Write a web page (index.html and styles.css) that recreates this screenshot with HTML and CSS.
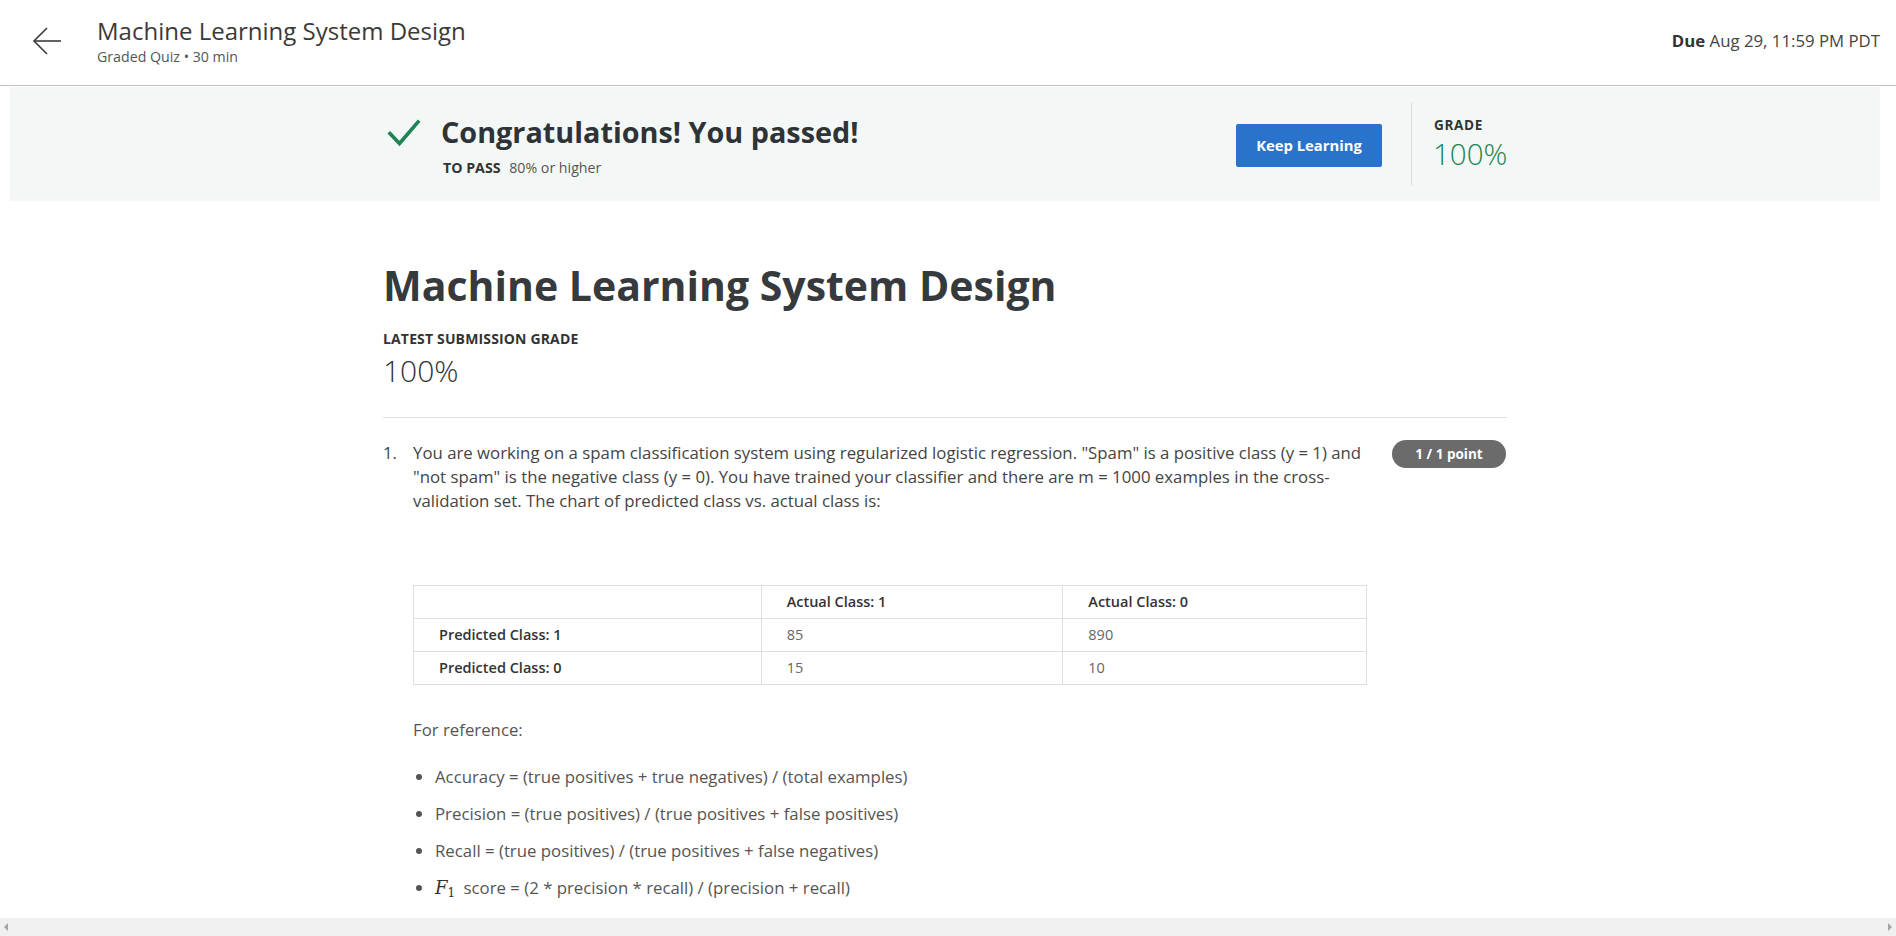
FILE: index.html
```html
<!DOCTYPE html>
<html lang="en">
<head>
<meta charset="utf-8">
<title>Machine Learning System Design</title>
<link rel="stylesheet" href="styles.css">
</head>
<body>
<div class="app">
  <header class="topbar">
    <div class="back">
      <svg width="30" height="30" viewBox="0 0 30 30" fill="none" stroke="#3c3c3c" stroke-width="1.6">
        <path d="M29 15H2"/>
        <path d="M15 2L2 15l13 13"/>
      </svg>
    </div>
    <div class="top-title">
      <div class="top-name">Machine Learning System Design</div>
      <div class="top-sub">Graded Quiz • 30 min</div>
    </div>
    <div class="due"><b>Due</b> Aug 29, 11:59 PM PDT</div>
  </header>

  <main class="scroll">
    <section class="banner">
      <div class="wrap banner-inner">
        <div class="pass">
          <svg class="check" width="34" height="30" viewBox="0 0 34 30" fill="none" stroke="#1f8354" stroke-width="3.6" stroke-linecap="square">
            <path d="M3 15.5l9.5 10L31 4"/>
          </svg>
          <div class="pass-text">
            <div class="pass-title">Congratulations! You passed!</div>
            <div class="pass-sub"><b>TO PASS</b> 80% or higher</div>
          </div>
        </div>
        <button class="keep">Keep Learning</button>
        <div class="vline"></div>
        <div class="grade">
          <div class="grade-label">GRADE</div>
          <div class="grade-value">100%</div>
        </div>
      </div>
    </section>

    <section class="wrap content">
      <h1 class="title">Machine Learning System Design</h1>
      <div class="latest-label">LATEST SUBMISSION GRADE</div>
      <div class="latest-value">100%</div>
      <hr class="divider">

      <div class="question">
        <div class="qnum">1.</div>
        <div class="qbody">
          <p class="qtext">You are working on a spam classification system using regularized logistic regression. "Spam" is a positive class (y = 1) and "not spam" is the negative class (y = 0). You have trained your classifier and there are m = 1000 examples in the cross-validation set. The chart of predicted class vs. actual class is:</p>

          <table class="chart">
            <colgroup><col class="c1"><col class="c2"><col class="c3"></colgroup>
            <tr><th></th><th>Actual Class: 1</th><th>Actual Class: 0</th></tr>
            <tr><th>Predicted Class: 1</th><td>85</td><td>890</td></tr>
            <tr><th>Predicted Class: 0</th><td>15</td><td>10</td></tr>
          </table>

          <p class="ref">For reference:</p>
          <ul class="formulas">
            <li>Accuracy = (true positives + true negatives) / (total examples)</li>
            <li>Precision = (true positives) / (true positives + false positives)</li>
            <li>Recall = (true positives) / (true positives + false negatives)</li>
            <li><span class="math"><i>F</i><sub>1</sub></span> score = (2 * precision * recall) / (precision + recall)</li>
          </ul>
        </div>
        <div class="badge">1 / 1 point</div>
      </div>
    </section>
  </main>

  <div class="hscroll">
    <span class="arr-left"></span>
    <span class="arr-right"></span>
  </div>
</div>
</body>
</html>
```

FILE: styles.css
```css
* { box-sizing: border-box; }
html, body { margin: 0; padding: 0; }
body {
  font-family: "Open Sans", "Liberation Sans", sans-serif;
  color: #373a3c;
  background: #fff;
}
.app {
  height: 936px;
  display: flex;
  flex-direction: column;
  overflow: hidden;
}

/* top bar */
.topbar {
  height: 86px;
  flex: 0 0 86px;
  border-bottom: 1px solid #c4c4c4;
  display: flex;
  align-items: center;
  padding: 0 16px 4px 32px;
}
.back { width: 30px; height: 30px; margin-right: 35px; display: flex; }
.top-title { flex: 1; }
.top-name { font-size: 24px; line-height: 32px; color: #3a3a3a; }
.top-sub { font-size: 14.2px; line-height: 20px; color: #555; }
.due { font-size: 16.8px; color: #444; margin-top: 0; }
.due b { color: #333; font-weight: 700; }

/* scroll area */
.scroll {
  flex: 1;
  overflow: hidden;
  padding: 1px 16px 0 10px;
}
.wrap { width: 1124px; margin: 0 auto; }

.banner { background: #f3f8f7; height: 114px; }
.banner-inner { height: 114px; display: flex; align-items: center; }
.pass { flex: 1; display: flex; align-items: flex-start; padding-left: 4px; margin-top: 3px; }
.check { margin-top: 4px; margin-right: 20px; flex: none; }
.pass-title { font-size: 28.8px; line-height: 36px; font-weight: 700; color: #2f3336; }
.pass-sub { font-size: 14.2px; line-height: 20px; margin-top: 8px; color: #555; padding-left: 2px; }
.pass-sub b { color: #333; margin-right: 5px; }
.keep {
  width: 146px; height: 43px;
  background: #2a73cc; color: #fff;
  border: 0; border-radius: 2px;
  font-family: inherit; font-size: 14.8px; font-weight: 700;
  margin-top: 2px;
}
.vline { width: 1px; height: 82px; background: #dadada; margin: 0 22px 0 29px; }
.grade { width: 73px; margin-top: 1px; }
.grade-label { font-size: 13.6px; line-height: 18px; font-weight: 700; letter-spacing: 0.6px; color: #333; }
.grade-value { font-size: 29.5px; line-height: 40px; font-weight: 300; color: #1f8354; margin-left: -1px; }

/* content */
.content { padding-top: 56px; }
.title { margin: 0; font-size: 41px; line-height: 56px; font-weight: 700; color: #373a3c; }
.latest-label { margin-top: 16px; font-size: 14px; letter-spacing: 0.15px; line-height: 20px; font-weight: 700; color: #333; }
.latest-value { margin-top: 1px; font-size: 30px; line-height: 42px; font-weight: 300; color: #333; }
.divider { border: 0; border-top: 1px solid #e0e0e0; margin: 25px 0 0; height: 0; }

.question { display: flex; align-items: flex-start; margin-top: 23px; font-size: 16.8px; line-height: 24px; color: #444; }
.qnum { width: 30px; flex: none; }
.qbody { width: 965px; flex: none; }
.qtext { margin: 0; }
.badge {
  margin-left: 14px; margin-top: -1px;
  width: 114px; height: 28px; flex: none;
  border-radius: 14px; background: #6b6b6b; color: #fff;
  font-size: 13.5px; font-weight: 700; line-height: 28px; text-align: center;
}

.chart { margin-top: 72px; border-collapse: collapse; width: 954px; font-size: 14.5px; }
.chart .c1 { width: 348px; }
.chart .c2 { width: 302px; }
.chart .c3 { width: 304px; }
.chart th, .chart td {
  border: 1px solid #dfdfdf;
  height: 33px; padding: 0 0 0 25px;
  text-align: left; vertical-align: middle; line-height: 20px;
}
.chart th { font-weight: 600; color: #333; }
.chart td { color: #666; font-weight: 400; }

.ref { margin: 33px 0 0; color: #555; }
.formulas { margin: 23px 0 0; padding: 0 0 0 22px; color: #555; }
.formulas li { margin-bottom: 13px; }
.math { font-family: "DejaVu Serif", "Liberation Serif", serif; font-size: 18px; color: #333; margin-right: 4px; }
.math i { font-style: italic; }
.math sub { font-size: 12px; font-style: normal; vertical-align: -3px; }

/* horizontal scrollbar */
.hscroll {
  flex: 0 0 18px; height: 18px; background: #f0f0f0;
  display: flex; justify-content: space-between; align-items: center;
  padding: 0 4px;
}
.arr-left, .arr-right { width: 0; height: 0; border-top: 4px solid transparent; border-bottom: 4px solid transparent; }
.arr-left { border-right: 4px solid #a3a3a3; }
.arr-right { border-left: 4px solid #a3a3a3; }
```
